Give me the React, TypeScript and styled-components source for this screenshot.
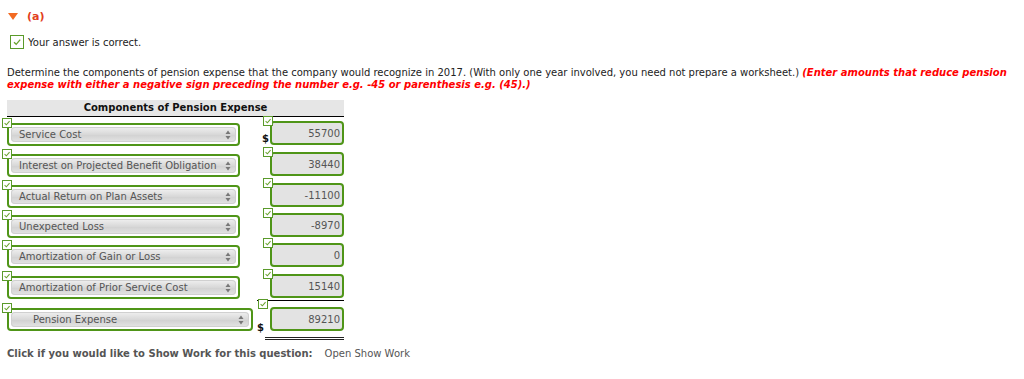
import React from 'react'
import styled, { createGlobalStyle } from 'styled-components'

const GlobalStyle = createGlobalStyle`
  html, body { margin: 0; padding: 0; background: #fff; }
  body { font-family: "DejaVu Sans", Verdana, sans-serif; font-size: 10px; color: #222; }
`

const Page = styled.div`
  width: 1024px;
  height: 379px;
  padding: 9px 0 0 7px;
  box-sizing: border-box;
  overflow: hidden;
`

const PartHeader = styled.div`
  display: flex;
  align-items: center;
  gap: 9px;
  height: 14px;
  padding-left: 1px;
  color: #e2401c;
  font-weight: bold;
  font-size: 11px;
`

const Triangle = styled.span`
  width: 0;
  height: 0;
  border-left: 5px solid transparent;
  border-right: 5px solid transparent;
  border-top: 7px solid #f26a22;
`

const Correct = styled.div`
  display: flex;
  align-items: center;
  gap: 4px;
  margin: 12px 0 0 3px;
  height: 14px;
  color: #222;
`

const CheckBox = styled.span<{ $size: number }>`
  display: inline-flex;
  align-items: center;
  justify-content: center;
  width: ${p => p.$size}px;
  height: ${p => p.$size}px;
  box-sizing: border-box;
  border: 1px solid #5a9a2a;
  background: #fff;
`

const Instruction = styled.p`
  margin: 18px 0 0;
  line-height: 12px;
  width: 1012px;
  color: #222;
`

const Red = styled.em`
  color: #ff0000;
  font-weight: bold;
`

const Table = styled.div`
  margin-top: 9px;
  width: 337px;
`

const TableHead = styled.div`
  height: 16px;
  line-height: 16px;
  background: #e6e6e6;
  border-bottom: 1px solid #000;
  text-align: center;
  font-weight: bold;
  color: #111;
`

const Row = styled.div<{ $top: number }>`
  display: flex;
  align-items: flex-start;
  padding-top: ${p => p.$top}px;
`

const SelectCell = styled.div<{ $pad: number }>`
  position: relative;
  width: 257px;
  padding-top: ${p => p.$pad}px;
`

const Badge = styled(CheckBox)<{ $at: number }>`
  position: absolute;
  left: -5px;
  top: ${p => p.$at}px;
`

const SelectFrame = styled.div<{ $w: number }>`
  width: ${p => p.$w}px;
  height: 23px;
  box-sizing: border-box;
  border: 2px solid #4f9518;
  border-radius: 4px;
  padding: 2px 2px;
  background: #fff;
`

const Select = styled.div<{ $indent: number }>`
  height: 15px;
  display: flex;
  align-items: center;
  justify-content: space-between;
  padding: 0 5px 0 ${p => p.$indent}px;
  border-radius: 4px;
  background: linear-gradient(#f0f0f0, #d8d8d8 50%, #d2d2d2 55%, #e4e4e4);
  color: #555;
  white-space: nowrap;
  box-shadow: inset 0 0 0 1px #d0d0d0;
`

const Arrows = styled.svg`
  flex: none;
`

const AmountCell = styled.div<{ $pad: number; $rule?: boolean }>`
  position: relative;
  flex: 1;
  display: flex;
  align-items: flex-end;
  padding-top: ${p => p.$pad}px;
  border-top: ${p => (p.$rule ? '1px solid #000' : 'none')};
`

const AmountBadge = styled(CheckBox)<{ $at: number }>`
  position: absolute;
  left: 1px;
  top: ${p => p.$at}px;
`

const Dollar = styled.span<{ $lift: number }>`
  width: 8px;
  font-weight: bold;
  color: #111;
  line-height: 11px;
  margin-bottom: ${p => p.$lift}px;
`

const AmountBox = styled.div`
  margin-left: auto;
  width: 74px;
  height: 24px;
  box-sizing: border-box;
  border: 2px solid #4f9518;
  border-radius: 4px;
  background: #e3e3e3;
  color: #555;
  text-align: right;
  padding: 4px 2px 0 0;
  line-height: 13px;
`

const TotalAmountWrap = styled.div`
  margin-left: auto;
  width: 79px;
  padding: 0 0 6px;
  border-bottom: 3px double #222;
  display: flex;
  justify-content: flex-end;
`

const Footer = styled.div`
  margin-top: 8px;
  display: flex;
  gap: 12px;
  color: #555;
`

const FooterLabel = styled.span`
  font-weight: bold;
`

const Tick = ({ s = 8 }: { s?: number }) => (
  <svg width={s} height={s} viewBox="0 0 10 10">
    <path d="M2 5.2 L4.2 7.3 L8.2 2.6" fill="none" stroke="#6aa32e" strokeWidth="1.3" />
  </svg>
)

const UpDown = () => (
  <Arrows width="6" height="10" viewBox="0 0 6 10">
    <path d="M3 0.5 L5.5 4 L0.5 4 Z" fill="#777" />
    <path d="M3 9.5 L5.5 6 L0.5 6 Z" fill="#777" />
  </Arrows>
)

const rows = [
  { label: 'Service Cost', value: '55700', dollar: true, top: 0 },
  { label: 'Interest on Projected Benefit Obligation', value: '38440', top: 2 },
  { label: 'Actual Return on Plan Assets', value: '-11100', top: 2 },
  { label: 'Unexpected Loss', value: '-8970', top: 1 },
  { label: 'Amortization of Gain or Loss', value: '0', top: 1 },
  { label: 'Amortization of Prior Service Cost', value: '15140', top: 2 }
]

export default function App() {
  return (
    <Page>
      <GlobalStyle />
      <PartHeader>
        <Triangle />
        (a)
      </PartHeader>
      <Correct>
        <CheckBox $size={14}><Tick s={10} /></CheckBox>
        Your answer is correct.
      </Correct>
      <Instruction>
        Determine the components of pension expense that the company would recognize in 2017. (With only one year involved, you need not prepare a worksheet.){' '}
        <Red>(Enter amounts that reduce pension expense with either a negative sign preceding the number e.g. -45 or parenthesis e.g. (45).)</Red>
      </Instruction>
      <Table>
        <TableHead>Components of Pension Expense</TableHead>
        {rows.map(r => (
          <Row key={r.label} $top={r.top}>
            <SelectCell $pad={6}>
              <Badge $size={10} $at={1}><Tick /></Badge>
              <SelectFrame $w={233}>
                <Select $indent={8}>
                  {r.label}
                  <UpDown />
                </Select>
              </SelectFrame>
            </SelectCell>
            <AmountCell $pad={4}>
              <AmountBadge $size={10} $at={-1}><Tick /></AmountBadge>
              <Dollar $lift={1}>{r.dollar ? '$' : ''}</Dollar>
              <AmountBox>{r.value}</AmountBox>
            </AmountCell>
          </Row>
        ))}
        <Row $top={1}>
          <SelectCell $pad={8}>
            <Badge $size={10} $at={3}><Tick /></Badge>
            <SelectFrame $w={246}>
              <Select $indent={22}>
                Pension Expense
                <UpDown />
              </Select>
            </SelectFrame>
          </SelectCell>
          <AmountCell $pad={6} $rule>
            <AmountBadge $size={10} $at={-2}><Tick /></AmountBadge>
            <Dollar $lift={7}>$</Dollar>
            <TotalAmountWrap>
              <AmountBox>89210</AmountBox>
            </TotalAmountWrap>
          </AmountCell>
        </Row>
      </Table>
      <Footer>
        <FooterLabel>Click if you would like to Show Work for this question:</FooterLabel>
        <span>Open Show Work</span>
      </Footer>
    </Page>
  )
}
